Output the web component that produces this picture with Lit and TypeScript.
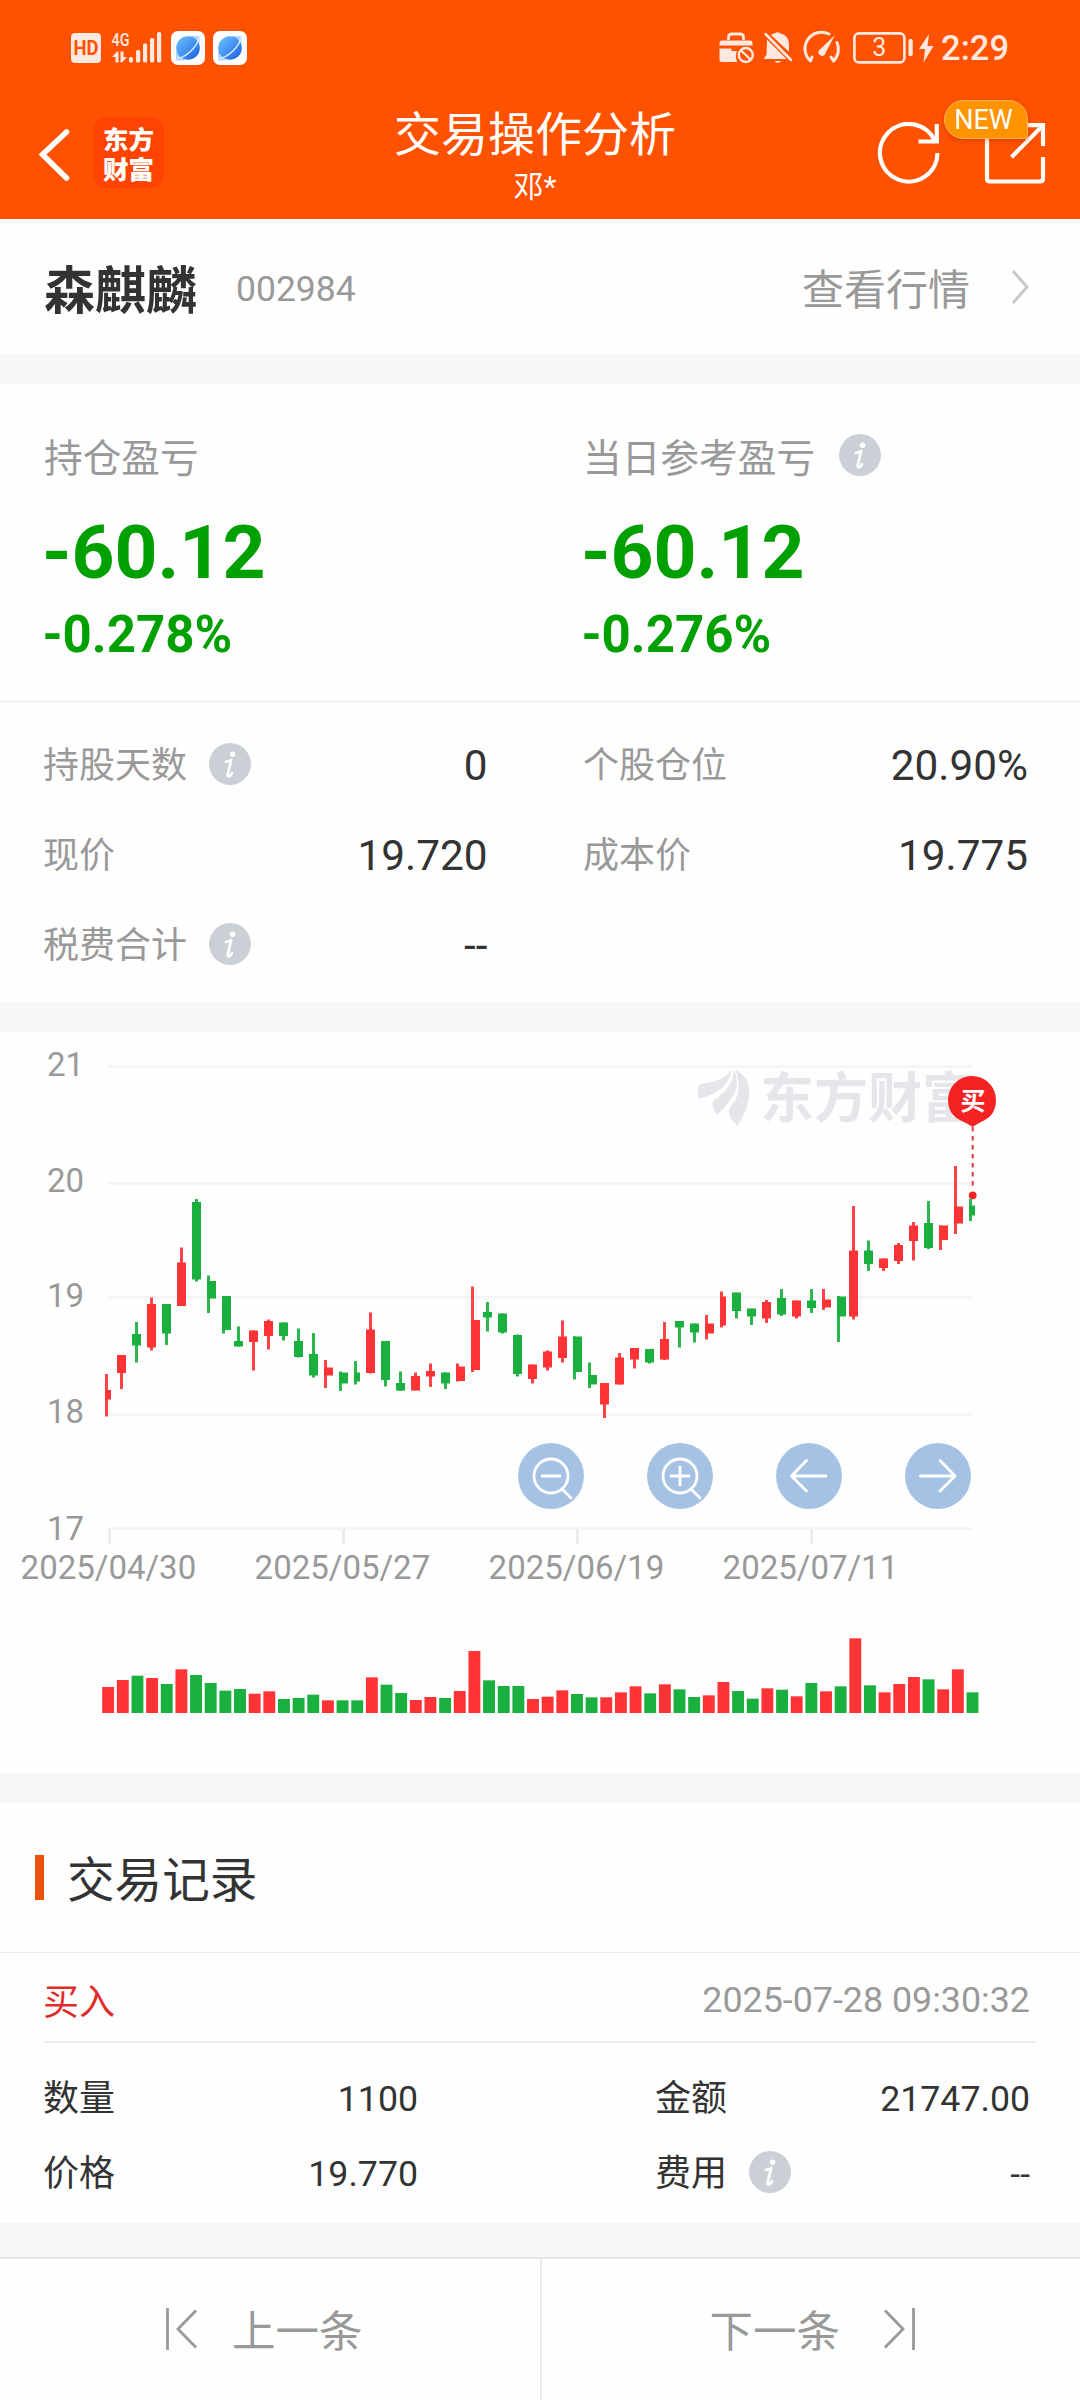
import { LitElement, html, svg, css } from "lit";
import { customElement, property } from "lit/decorators.js";

const RED = "#fe3336";
const GREEN = "#1ab03f";

// Candle: body left, wick left, high, body top, body bottom, low, rising.
// Vertical values are thirds of a pixel below the chart origin.
type Candle = [number, number, number, number, number, number, number];
const CANDLES: Candle[] = [
  [105, 105, 1032, 1080, 1109, 1160, 1], [117, 120, 975, 975, 1029, 1077, 1],
  [132, 135, 876, 912, 947, 998, 0], [147, 150, 802, 822, 953, 962, 1],
  [162, 165, 822, 822, 911, 945, 0], [177, 180, 653, 697, 828, 828, 1],
  [192, 195, 507, 516, 748, 754, 0], [207, 207, 736, 753, 806, 849, 0],
  [222, 222, 798, 798, 900, 911, 0], [234, 237, 889, 933, 950, 950, 0],
  [249, 252, 902, 902, 936, 1022, 1], [264, 267, 868, 873, 918, 959, 1],
  [279, 282, 878, 878, 918, 931, 0], [294, 297, 896, 933, 981, 983, 0],
  [309, 312, 909, 972, 1036, 1042, 0], [324, 324, 990, 1013, 1036, 1074, 1],
  [339, 339, 1024, 1027, 1060, 1083, 0], [354, 354, 993, 1027, 1054, 1063, 0],
  [366, 369, 848, 899, 1029, 1030, 1], [381, 384, 933, 933, 1050, 1070, 0],
  [396, 399, 1025, 1059, 1081, 1083, 0], [411, 414, 1028, 1038, 1081, 1081, 1],
  [426, 429, 1000, 1023, 1040, 1071, 1], [441, 444, 1027, 1027, 1060, 1077, 0],
  [456, 456, 1000, 1010, 1053, 1054, 1], [471, 471, 770, 870, 1020, 1026, 1],
  [483, 486, 816, 846, 862, 904, 0], [498, 501, 850, 850, 908, 911, 0],
  [513, 516, 914, 915, 1032, 1039, 0], [528, 531, 1003, 1003, 1047, 1060, 1],
  [543, 546, 962, 965, 1012, 1021, 1], [558, 561, 871, 919, 984, 997, 1],
  [573, 573, 919, 919, 1026, 1049, 0], [588, 588, 997, 1035, 1064, 1074, 0],
  [600, 603, 1059, 1059, 1124, 1164, 1], [615, 618, 969, 982, 1064, 1064, 1],
  [630, 633, 954, 954, 988, 1015, 1], [645, 648, 957, 957, 998, 1001, 0],
  [660, 663, 876, 927, 988, 990, 1], [675, 678, 873, 873, 893, 952, 0],
  [690, 693, 881, 881, 908, 938, 0], [705, 705, 855, 881, 911, 928, 1],
  [720, 720, 785, 800, 887, 893, 1], [732, 735, 787, 787, 843, 865, 0],
  [747, 750, 836, 836, 860, 885, 0], [762, 765, 810, 816, 866, 879, 1],
  [777, 780, 777, 804, 853, 858, 0], [792, 795, 812, 812, 860, 866, 1],
  [807, 810, 777, 812, 834, 849, 0], [822, 822, 777, 809, 832, 840, 1],
  [837, 837, 798, 800, 860, 936, 0], [849, 852, 528, 662, 860, 869, 1],
  [864, 867, 631, 662, 702, 723, 0], [879, 882, 686, 686, 714, 723, 1],
  [894, 897, 639, 645, 693, 702, 1], [909, 912, 576, 586, 633, 691, 1],
  [924, 927, 513, 579, 654, 657, 0], [939, 939, 586, 586, 630, 660, 1],
  [954, 954, 408, 530, 581, 612, 1], [969, 969, 507, 527, 557, 573, 0],
];
const NARROW = new Set([105, 354, 720, 969]);

// Volume bar heights, in thirds of a pixel.
const VOLUMES = [
  78, 99, 112, 105, 87, 131, 114, 90, 67, 72, 58, 65, 42, 45, 55, 38, 38, 38, 107, 85,
  60, 39, 48, 45, 66, 186, 98, 81, 81, 42, 49, 68, 57, 47, 47, 62, 80, 59, 86, 71,
  48, 53, 93, 66, 43, 74, 70, 50, 90, 65, 80, 224, 83, 62, 87, 108, 101, 71, 131, 62,
];

@customElement("info-dot")
class InfoDot extends LitElement {
  static styles = css`
    :host { display: block; width: 42px; height: 42px; flex: none; }
    svg { display: block; }
  `;
  render() {
    return html`<svg width="42" height="42" viewBox="0 0 42 42">
      <circle cx="21" cy="21" r="21" fill="#cbd0d6" />
      <circle cx="23.600" cy="11.200" r="2.700" fill="#fff" />
      <path d="M17 18.800q3.500-.4 5.200-1.800L18.800 31q-.6 3 1.600 2.200 1.600-.8 2.600-3" fill="none" stroke="#fff" stroke-width="2.700" stroke-linecap="round" stroke-linejoin="round" />
    </svg>`;
  }
}

@customElement("status-bar")
class StatusBar extends LitElement {
  static styles = css`
    :host { display: flex; align-items: center; justify-content: space-between; height: 95px; padding: 0 71px; color: #ffe8df; }
    .group { display: flex; align-items: center; }
    .signals { gap: 8px; }
    svg { display: block; overflow: visible; }
    .time { font: 500 34.500px/40px Roboto, sans-serif; margin-left: 8px; }
  `;
  private browser = html`<svg width="34" height="34" viewBox="0 0 34 34">
    <defs><linearGradient id="g" x1="0" y1="0" x2="1" y2="1">
      <stop offset="0" stop-color="#6cc3fb" /><stop offset=".5" stop-color="#4694f4" /><stop offset="1" stop-color="#1559e0" />
    </linearGradient></defs>
    <rect width="34" height="34" rx="7" fill="#fff" />
    <path d="M19 5h9.500v9zM5 20v9.500h9z" fill="#b4d4fb" />
    <circle cx="17" cy="17" r="11.800" fill="url(#g)" />
    <path d="M6 27.500C14 27 27 16 28 6" fill="none" stroke="#d9ecff" stroke-width="1.500" />
  </svg>`;
  render() {
    return html`
      <div class="group signals">
        <svg width="92" height="34" viewBox="71 30 92 34" fill="currentColor">
          <rect x="71" y="32" width="30" height="30" rx="4" />
          <text x="86" y="53.800" font-family="Roboto, sans-serif" font-size="20" font-weight="700" fill="#ff5200" text-anchor="middle" textLength="25" lengthAdjust="spacingAndGlyphs">HD</text>
          <text x="111.500" y="44.500" font-family="Roboto, sans-serif" font-size="19" font-weight="500" textLength="18" lengthAdjust="spacingAndGlyphs">4G</text>
          <path d="M112 56l5-5.500h1.500v11h-3v-5.500zM120.500 50.500v11h1.500l5-5.500h-3.500v-5.500z" />
          <rect x="129" y="56" width="4" height="5.500" rx="1.500" />
          <rect x="136" y="49" width="4.200" height="12.500" rx="1.500" />
          <rect x="143" y="42.500" width="4.200" height="19" rx="1.500" />
          <rect x="150" y="37" width="4.200" height="24.500" rx="1.500" />
          <rect x="157" y="31" width="4.200" height="30.500" rx="1.500" />
        </svg>
        ${this.browser}${this.browser}
      </div>
      <div class="group">
        <svg width="214" height="36" viewBox="722 29 214 36" fill="currentColor">
          <path d="M722.500 44.500V42q0-2.500 2.500-2.500h28q2.500 0 2.500 2.500v2.500z" />
          <path d="M731.500 39v-2.500q0-3.500 3.500-3.500h8q3.500 0 3.500 3.500V39" fill="none" stroke="currentColor" stroke-width="2.800" />
          <path d="M722.500 47.500h12v2.500h5.500q-2 4 0 11h-15q-2.500 0-2.500-2.500z" />
          <circle cx="748.800" cy="54" r="7" fill="none" stroke="currentColor" stroke-width="2.400" />
          <path d="M744 49.500l9.500 9" stroke="currentColor" stroke-width="2.400" />
          <path d="M774 34q2-1.500 4-1.800 2.500-2 5 0 9 2 9 11v7.500zM770 38.500l19.500 19.500h-22.500q0-2 2.500-4z" />
          <path d="M768.500 33l25.500 26" stroke="currentColor" stroke-width="2.500" stroke-linecap="round" />
          <path d="M777.500 60h6.500q-3.200 4-6.500 0z" />
          <path d="M832 33A16.500 16.500 0 0 0 813.500 60l1.500-4M840 41.500A16.500 16.500 0 0 1 836.500 60l-2.500-4" fill="none" stroke="currentColor" stroke-width="3" stroke-linejoin="round" stroke-linecap="round" />
          <path d="M838 34l-9.500 18a3.600 3.600 0 1 1-5-4z" />
          <rect x="857.400" y="32.400" width="50" height="29" rx="4.500" fill="none" stroke="currentColor" stroke-width="2.600" />
          <text x="882.300" y="54.800" font-family="Roboto, sans-serif" font-size="25" text-anchor="middle">3</text>
          <rect x="911.500" y="38" width="4.200" height="17" rx="1.500" />
          <path d="M932 33l-10 15h6l-1.500 13.500 10-16.500h-6z" />
        </svg>
        <span class="time">2:29</span>
      </div>`;
  }
}

@customElement("nav-bar")
class NavBar extends LitElement {
  static styles = css`
    :host { display: grid; grid-template-columns: 396px 278px 1fr; height: 124px; color: #fff; font-family: Roboto, "Noto Sans CJK SC", sans-serif; }
    svg { display: block; }
    .left { display: flex; align-items: flex-start; padding-left: 37px; gap: 22px; }
    .back { margin-top: 34px; }
    .brand { width: 71px; height: 71px; box-sizing: border-box; margin-top: 22px; padding-top: 6px; border-radius: 14px; background: #ff4402; font: 900 25.500px/30px "Noto Sans CJK SC", sans-serif; text-align: center; }
    .brand span { display: block; }
    .mid { display: flex; flex-direction: column; align-items: center; padding-top: 13px; white-space: nowrap; }
    .title { font-size: 47px; line-height: 54px; }
    .sub { font-size: 30px; line-height: 44px; margin-top: 3px; }
    .right { position: relative; display: flex; justify-content: flex-end; gap: 42px; padding: 27px 33px 0 0; }
    .badge { position: absolute; right: 52px; top: 5px; width: 84px; height: 39px; box-sizing: border-box; border: 1px solid #ffb25a; border-radius: 20px 20px 2px 20px; background: #ff9300; font-size: 27px; line-height: 38px; text-align: center; box-shadow: 0 2px 5px rgba(150, 40, 0, .35); padding-right: 5px; }
  `;
  render() {
    return html`
      <div class="left">
        <svg class="back" width="34" height="52" viewBox="0 0 34 52"><path d="M29.500 3L5.500 25.500l24 23.500" fill="none" stroke="#fff" stroke-width="5.500" stroke-linecap="round" /></svg>
        <div class="brand"><span>东方</span><span>财富</span></div>
      </div>
      <div class="mid"><div class="title">交易操作分析</div><div class="sub">邓*</div></div>
      <div class="right">
        <svg width="64" height="64" viewBox="877 122 64 64" fill="none" stroke="#fff" stroke-width="4.200">
          <path d="M937.500 153A28.800 28.800 0 1 1 935 141M936.800 124v17.500H918.500" />
        </svg>
        <svg width="64" height="64" viewBox="983 122 64 64" fill="none" stroke="#fff" stroke-width="4.200">
          <path d="M1009 125.200H987V178.500q0 3 3 3h50q3 0 3-3V157M1027 125.200h16V146M1043 125.200l-31.500 32" />
        </svg>
        <div class="badge">NEW</div>
      </div>`;
  }
}

@customElement("profit-cell")
class ProfitCell extends LitElement {
  @property() label = "";
  @property() amount = "";
  @property() rate = "";
  @property({ type: Boolean }) info = false;
  static styles = css`
    :host { display: block; font-family: Roboto, "Noto Sans CJK SC", sans-serif; }
    .label { display: flex; align-items: center; gap: 24px; height: 42px; font-size: 38.700px; color: #999; }
    .amount { font-size: 75px; line-height: 80px; font-weight: 700; color: #00a000; margin: 36px 0 0 -2px; }
    .rate { font-size: 51px; line-height: 60px; font-weight: 700; color: #00a000; margin: 13px 0 0 -1.500px; }
  `;
  render() {
    return html`<div class="label"><span>${this.label}</span>${this.info ? html`<info-dot></info-dot>` : ""}</div>
      <div class="amount">${this.amount}</div><div class="rate">${this.rate}</div>`;
  }
}

@customElement("pair-row")
class PairRow extends LitElement {
  @property() label = "";
  @property() value = "";
  @property({ type: Boolean }) info = false;
  static styles = css`
    :host { display: flex; align-items: center; font-family: Roboto, "Noto Sans CJK SC", sans-serif; font-size: 36px; line-height: 48px; color: var(--label, #999); }
    .value { margin-left: auto; font-size: var(--value-size, 42.300px); color: #333; }
    info-dot { margin: 0 0 4px 22px; }
  `;
  render() {
    return html`<span>${this.label}</span>${this.info ? html`<info-dot></info-dot>` : ""}<span class="value">${this.value}</span>`;
  }
}

@customElement("price-chart")
class PriceChart extends LitElement {
  static styles = css`
    :host { display: block; position: relative; height: 741px; }
    .plot { display: block; }
    .tools { position: absolute; left: 518px; top: 411px; display: flex; gap: 63px; }
    .tools svg { display: block; }
    .axis { font: 400 33px Roboto, sans-serif; fill: #999; }
    .mark { font: 700 54px "Noto Sans CJK SC", sans-serif; fill: #e6e6ea; }
    .pin { font: 700 25px "Noto Sans CJK SC", sans-serif; fill: #fff; }
  `;
  private tools = [
    svg`<circle cx="33" cy="33" r="17" /><path d="M24 33h18M44 46l9 9" />`,
    svg`<circle cx="33" cy="33" r="17" /><path d="M24 33h18M33 24v18M44 46l9 9" />`,
    svg`<path d="M50 33H16M30.500 17.500L15.500 33l15 15" />`,
    svg`<path d="M15.500 33h34M35 17.500l15 15.500-15 15" />`,
  ];
  private candle(c: Candle) {
    const [bx, wx, hi, top, bot, lo, up] = c;
    const y = (v: number) => Math.round((1030 + v / 3) * 2) / 2;
    return svg`<g fill=${up ? RED : GREEN}>
      <rect x=${wx} y=${y(hi)} width="3" height=${y(lo) - y(hi)} opacity=".92" />
      <rect x=${bx} y=${y(top)} width=${NARROW.has(bx) ? 6 : 9} height=${y(bot) - y(top)} /></g>`;
  }
  render() {
    const grid: [number, number, number][] = [[21, 1065, 1076], [20, 1182, 1192], [19, 1296, 1307], [18, 1413, 1423], [17, 1527, 1539.5]];
    const ticks: [string, number][] = [["2025/04/30", 108], ["2025/05/27", 342], ["2025/06/19", 576], ["2025/07/11", 810]];
    return html`<svg class="plot" width="1080" height="741" viewBox="0 1032 1080 741">
        ${grid.map(([v, y, base]) => svg`<rect x="108" y=${y} width="864" height="3" fill="#f5f5f5" />
          <text class="axis" x="47" y=${base}>${v}</text>`)}
        ${ticks.map(([t, x]) => svg`<rect x=${x} y="1529" width="3" height="15" fill="#ececec" />
          <text class="axis" x=${x + 0.4} y="1579" text-anchor="middle">${t}</text>`)}
        <g fill="#e6e6ea">
          <path d="M698.300 1099q-1.500-11 1-14 1-1.500 15-3.500 11-3.500 18-12.300-2 10-9 17.300-9 9-25 12.500z" />
          <path d="M717 1114.500q-5-7-4.500-11 .5-3 6.500-7 13-9 15.500-26.500 6 17-3.500 29-5 7.500-14 15.500z" />
          <path d="M735.500 1069.500q13 7 13.800 20.500.5 18-12 36-8-8-8.500-14 0-4 4.500-9 9.500-12 2.200-33.500z" />
        </g>
        <text class="mark" x="760" y="1117.500" textLength="216" lengthAdjust="spacingAndGlyphs">东方财富</text>
        ${CANDLES.map((c) => this.candle(c))}
        <path d="M972.700 1127v60" stroke="#de3a3a" stroke-width="2" stroke-dasharray="4.500 4.500" />
        <circle cx="972.700" cy="1195.300" r="3.900" fill="#f42323" />
        <path d="M948 1100a24 24 0 1 1 48 0q0 16-15 22-4 2-8.500 5-4-3-8.500-5-16-6-16-22z" fill="#f42323" />
        <text class="pin" x="973" y="1109.500" text-anchor="middle">买</text>
        ${VOLUMES.map((h, i) => svg`<rect x=${102.2 + i * 14.65} y=${1713 - h / 3} width="11.900" height=${h / 3} fill=${CANDLES[i][6] ? RED : GREEN} />`)}
      </svg>
      <div class="tools">
        ${this.tools.map((t) => html`<svg width="66" height="66" viewBox="0 0 66 66"><circle cx="33" cy="33" r="33" fill="#a5c2e4" />
          <g fill="none" stroke="#fff" stroke-width="2.800" stroke-linecap="round" stroke-linejoin="round">${t}</g></svg>`)}
      </div>`;
  }
}

@customElement("app-root")
class AppRoot extends LitElement {
  static styles = css`
    :host { display: flex; flex-direction: column; width: 1080px; height: 2400px; overflow: hidden; background: #fefefe; font-family: Roboto, "Noto Sans CJK SC", sans-serif; color: #333; }
    .top { background: #ff5200; flex: none; }
    .stock { display: flex; align-items: center; height: 135px; box-sizing: border-box; padding: 0 50px 0 44px; }
    .name { font-size: 51px; font-weight: 700; }
    .code { font-size: 35.500px; color: #999; margin: 5px 0 0 39px; }
    .link { font-size: 42px; color: #999; margin-left: auto; margin-right: 40px; }
    .stock svg { display: block; }
    .gap { height: 30px; background: #f7f7f7; flex: none; }
    .profit { display: grid; grid-template-columns: 539px 1fr; height: 317px; padding: 50px 0 0 44px; box-sizing: border-box; }
    .detail { display: grid; grid-template-columns: 444.500px 445px; column-gap: 95.500px; grid-auto-rows: 90px; height: 301px; padding: 18.500px 0 0 43px; box-sizing: border-box; border-top: 1px solid #ebebeb; }
    .head { display: flex; align-items: center; height: 150px; box-sizing: border-box; padding: 0 0 2px 35px; gap: 23px; font-size: 47.600px; border-bottom: 1px solid #ebebeb; }
    .bar { width: 9px; height: 45px; background: #e65309; margin-top: 2px; }
    .deal { display: flex; justify-content: space-between; align-items: center; height: 90px; margin: 0 43px; padding-right: 7px; box-sizing: border-box; padding-top: 3px; border-bottom: 2px solid #eee; font-size: 36px; }
    .side { color: #e12b2b; }
    .date { color: #999; font-size: 35.800px; margin-top: 2px; }
    .record { display: grid; grid-template-columns: 375px 375px; column-gap: 237px; grid-auto-rows: 75px; height: 180px; padding: 18px 0 0 43px; box-sizing: border-box; --label: #333; --value-size: 35.700px; }
    .foot-gap { height: 34px; background: #f6f7f9; flex: none; }
    .footer { display: grid; grid-template-columns: 542px 1fr; flex: 1; border-top: 2px solid #e8e8e8; }
    .step { display: flex; align-items: center; padding-bottom: 2px; font-size: 43.500px; color: #999; }
    .prev { border-right: 2px solid #eaeaea; padding-left: 165px; gap: 34px; }
    .next { padding-left: 167.500px; gap: 43px; }
    .step svg { display: block; }
  `;
  render() {
    return html`
      <div class="top"><status-bar></status-bar><nav-bar></nav-bar></div>
      <div class="stock">
        <span class="name">森麒麟</span><span class="code">002984</span><span class="link">查看行情</span>
        <svg width="20" height="36" viewBox="0 0 20 36"><path d="M3 2l14 16L3 34" fill="none" stroke="#c8c8c8" stroke-width="3" /></svg>
      </div>
      <div class="gap"></div>
      <div class="profit">
        <profit-cell label="持仓盈亏" amount="-60.12" rate="-0.278%"></profit-cell>
        <profit-cell label="当日参考盈亏" amount="-60.12" rate="-0.276%" info></profit-cell>
      </div>
      <div class="detail">
        <pair-row label="持股天数" value="0" info></pair-row>
        <pair-row label="个股仓位" value="20.90%"></pair-row>
        <pair-row label="现价" value="19.720"></pair-row>
        <pair-row label="成本价" value="19.775"></pair-row>
        <pair-row label="税费合计" value="--" info></pair-row>
      </div>
      <div class="gap"></div>
      <price-chart></price-chart>
      <div class="gap"></div>
      <div class="head"><span class="bar"></span><span>交易记录</span></div>
      <div class="deal"><span class="side">买入</span><span class="date">2025-07-28 09:30:32</span></div>
      <div class="record">
        <pair-row label="数量" value="1100"></pair-row>
        <pair-row label="金额" value="21747.00"></pair-row>
        <pair-row label="价格" value="19.770"></pair-row>
        <pair-row label="费用" value="--" info></pair-row>
      </div>
      <div class="foot-gap"></div>
      <div class="footer">
        <div class="step prev">
          <svg width="33" height="44" viewBox="0 0 33 44" fill="none" stroke="#999" stroke-width="2.800"><path d="M2.500 1v42M31 3.500L13 22l18 18.500" /></svg>
          <span>上一条</span>
        </div>
        <div class="step next">
          <span>下一条</span>
          <svg width="33" height="44" viewBox="0 0 33 44" fill="none" stroke="#999" stroke-width="2.800"><path d="M30.500 1v42M2 3.500L20 22 2 40.500" /></svg>
        </div>
      </div>`;
  }
}
